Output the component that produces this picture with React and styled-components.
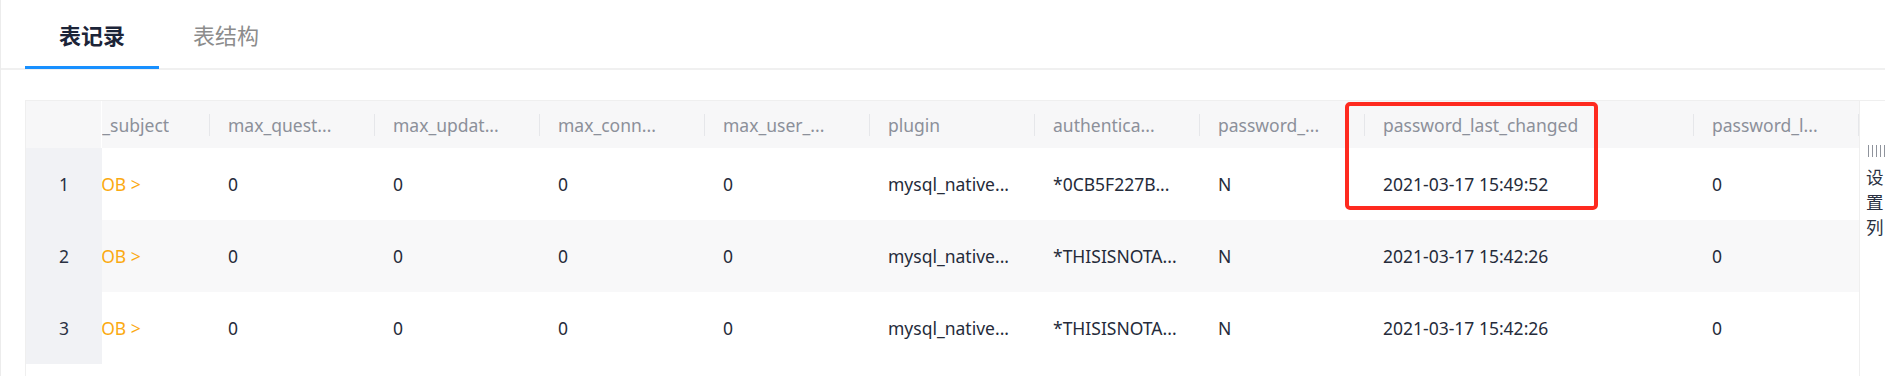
import React, { useLayoutEffect, useRef } from 'react';
import styled, { createGlobalStyle, css } from 'styled-components';

const GlobalStyle = createGlobalStyle`
  html, body {
    margin: 0;
    padding: 0;
    background: #ffffff;
    overflow: hidden;
  }
  body {
    font-family: "Noto Sans", "Noto Sans CJK SC", sans-serif;
  }
`;

const Page = styled.div`
  height: 376px;
  box-sizing: border-box;
  border-left: 1px solid #ececec;
  overflow: hidden;
`;

const TabNav = styled.div`
  display: flex;
  height: 70px;
  box-sizing: border-box;
  padding-left: 24px;
  border-bottom: 2px solid #f0f0f0;
`;

const Tab = styled.div`
  position: relative;
  height: 68px;
  line-height: 68px;
  padding: 0 34px;
  font-family: "Noto Sans CJK SC", sans-serif;
  font-size: 22px;
  font-weight: ${(p) => (p.$active ? 700 : 400)};
  color: ${(p) => (p.$active ? '#1c2438' : '#8c8c8c')};
  cursor: pointer;
  ${(p) =>
    p.$active &&
    css`
      &::after {
        content: '';
        position: absolute;
        left: 0;
        right: 0;
        bottom: -1px;
        height: 3px;
        background: #1890ff;
      }
    `}
`;

const TableWrap = styled.div`
  position: relative;
  display: flex;
  margin: 30px 0 0 24px;
  height: 276px;
  box-sizing: border-box;
  border-top: 1px solid #efefef;
  border-left: 1px solid #efefef;
`;

const ScrollArea = styled.div`
  flex: 1 1 auto;
  min-width: 0;
  overflow: hidden;
`;

const Row = styled.div`
  display: flex;
  width: max-content;
  height: ${(p) => (p.$head ? 47 : 72)}px;
  background: ${(p) => (p.$head ? '#f7f7f8' : p.$striped ? '#f8f8f9' : '#ffffff')};
`;

const IndexCell = styled.div`
  position: sticky;
  left: 0;
  z-index: 2;
  flex: 0 0 76px;
  box-sizing: border-box;
  display: flex;
  align-items: center;
  justify-content: center;
  font-size: 17.5px;
  color: #2a3142;
  background: ${(p) => (p.$head ? '#f7f7f8' : '#f1f2f5')};
  border-right: ${(p) => (p.$head ? '1px solid #ffffff' : 'none')};
`;

const HeadCell = styled.div`
  position: relative;
  flex: 0 0 ${(p) => p.$w}px;
  box-sizing: border-box;
  display: flex;
  align-items: center;
  padding: 0 18px;
  font-size: 17.5px;
  color: #8c909a;
  white-space: nowrap;

  &::after {
    content: '';
    position: absolute;
    right: 0;
    top: 13px;
    width: 1px;
    height: 22px;
    background: #e6e7ea;
  }
`;

const CellText = styled.span`
  display: block;
  overflow: hidden;
  text-overflow: ellipsis;
  white-space: nowrap;
`;

const DataCell = styled.div`
  flex: 0 0 ${(p) => p.$w}px;
  box-sizing: border-box;
  display: flex;
  align-items: center;
  padding: 0 18px;
  font-size: 17.5px;
  color: ${(p) => (p.$link ? '#fbaa12' : '#252b3a')};
  white-space: nowrap;
  overflow: hidden;
`;

const BlobIcon = styled.svg`
  flex: 0 0 auto;
  margin-right: 4px;
`;

const SettingsColumn = styled.div`
  flex: 0 0 26px;
  box-sizing: border-box;
  border-left: 1px solid #efefef;
  padding: 44px 0 0 6px;
  overflow: hidden;
  background: #ffffff;
`;

const SettingsIcon = styled.svg`
  display: block;
  margin: 0 0 7px 2px;
`;

const SettingsLabel = styled.div`
  width: 20px;
  font-family: "Noto Sans CJK SC", sans-serif;
  font-size: 17.5px;
  line-height: 25px;
  color: #2a3142;
  word-break: break-all;
`;

const Annotation = styled.div`
  position: absolute;
  left: 1319px;
  top: 1px;
  width: 253px;
  height: 108px;
  box-sizing: border-box;
  border: 4px solid #fe2a1f;
  border-radius: 5px;
  pointer-events: none;
  z-index: 5;
`;

const columns = [
  { key: 'x509_subject', title: 'x509_subject', w: 165 },
  { key: 'max_questions', title: 'max_quest...', w: 165 },
  { key: 'max_updates', title: 'max_updat...', w: 165 },
  { key: 'max_connections', title: 'max_conn...', w: 165 },
  { key: 'max_user_connections', title: 'max_user_...', w: 165 },
  { key: 'plugin', title: 'plugin', w: 165 },
  { key: 'authentication_string', title: 'authentica...', w: 165 },
  { key: 'password_expired', title: 'password_...', w: 165 },
  { key: 'password_last_changed', title: 'password_last_changed', w: 329 },
  { key: 'password_lifetime', title: 'password_l...', w: 165 },
];

const base = {
  x509_subject: 'BLOB >',
  max_questions: '0',
  max_updates: '0',
  max_connections: '0',
  max_user_connections: '0',
  plugin: 'mysql_native...',
  password_expired: 'N',
  password_lifetime: '0',
};

const rows = [
  { ...base, authentication_string: '*0CB5F227B...', password_last_changed: '2021-03-17 15:49:52' },
  { ...base, authentication_string: '*THISISNOTA...', password_last_changed: '2021-03-17 15:42:26' },
  { ...base, authentication_string: '*THISISNOTA...', password_last_changed: '2021-03-17 15:42:26' },
];

function ColumnsIcon() {
  return (
    <SettingsIcon width="20" height="12" viewBox="0 0 20 12">
      {[0.5, 4.5, 8.5, 12.5, 16.5].map((x) => (
        <line key={x} x1={x} y1="0" x2={x} y2="12" stroke="#8f939c" strokeWidth="1" />
      ))}
    </SettingsIcon>
  );
}

function FileIcon() {
  return (
    <BlobIcon width="14" height="16" viewBox="0 0 14 16">
      <path d="M2 1h7l3 3v11H2z" fill="none" stroke="#fbaa12" strokeWidth="1.2" />
    </BlobIcon>
  );
}

export default function App() {
  const scrollRef = useRef(null);

  useLayoutEffect(() => {
    const el = scrollRef.current;
    if (el) el.scrollLeft = el.scrollWidth - el.clientWidth;
  }, []);

  return (
    <>
      <GlobalStyle />
      <Page>
        <TabNav>
          <Tab $active>表记录</Tab>
          <Tab>表结构</Tab>
        </TabNav>
        <TableWrap>
          <ScrollArea ref={scrollRef}>
            <Row $head>
              <IndexCell $head />
              {columns.map((c) => (
                <HeadCell key={c.key} $w={c.w}>
                  <CellText>{c.title}</CellText>
                </HeadCell>
              ))}
            </Row>
            {rows.map((r, i) => (
              <Row key={i} $striped={i % 2 === 1}>
                <IndexCell>{i + 1}</IndexCell>
                {columns.map((c) => {
                  const isBlob = c.key === 'x509_subject';
                  return (
                    <DataCell key={c.key} $w={c.w} $link={isBlob}>
                      {isBlob && <FileIcon />}
                      <CellText>{r[c.key]}</CellText>
                    </DataCell>
                  );
                })}
              </Row>
            ))}
          </ScrollArea>
          <SettingsColumn>
            <ColumnsIcon />
            <SettingsLabel>设置列</SettingsLabel>
          </SettingsColumn>
          <Annotation />
        </TableWrap>
      </Page>
    </>
  );
}
